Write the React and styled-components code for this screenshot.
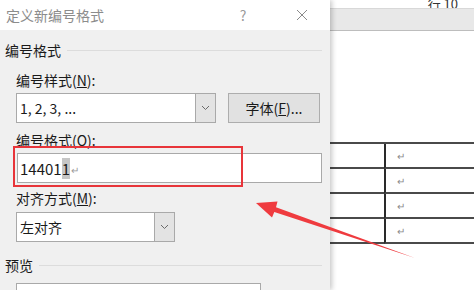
import React from 'react';
import styled, { createGlobalStyle } from 'styled-components';

const GlobalStyle = createGlobalStyle`
	html, body {
		margin: 0;
		padding: 0;
		background: #ffffff;
	}
	body {
		font-family: "Noto Sans CJK SC", "Noto Sans", sans-serif;
		color: #1a1a1a;
	}
`;

const Page = styled.div`
	position: relative;
	width: 474px;
	height: 290px;
	overflow: hidden;
	display: flex;
	flex-direction: row;
`;

const Dialog = styled.div`
	position: relative;
	z-index: 1;
	width: 330px;
	flex-shrink: 0;
	display: flex;
	flex-direction: column;
	overflow: hidden;
	background: #f0f0f0;
	box-shadow: 2px 0 5px rgba(0, 0, 0, 0.22);
`;

const TitleBar = styled.div`
	height: 30px;
	flex-shrink: 0;
	display: flex;
	align-items: center;
	background: #ffffff;
	padding-left: 6px;
	font-size: 14px;
	color: #8c8c8c;
`;

const TitleText = styled.span`
	flex: 1;
`;

const Help = styled.span`
	width: 14px;
	text-align: center;
	margin-right: 46px;
	color: #9a9a9a;
	font-size: 14px;
`;

const CloseBox = styled.span`
	width: 12px;
	height: 12px;
	margin-right: 22px;
	display: flex;
`;

const Body = styled.div`
	flex-shrink: 0;
	padding: 10px 8px 0 5px;
	display: flex;
	flex-direction: column;
`;

const GroupHeader = styled.div`
	display: flex;
	align-items: center;
	gap: 6px;
	height: 20px;
	font-size: 14px;
	margin-top: ${(p) => p.$top || 0}px;

	&::after {
		content: '';
		flex: 1;
		height: 1px;
		background: #dcdcdc;
	}
`;

const Label = styled.div`
	height: 20px;
	line-height: 20px;
	font-size: 14px;
	margin-left: 11px;
	margin-top: ${(p) => p.$top}px;
`;

const Row = styled.div`
	display: flex;
	align-items: center;
	gap: 12px;
	margin-left: 11px;
	margin-top: ${(p) => p.$top}px;
`;

const Select = styled.div`
	width: ${(p) => p.$width}px;
	height: 30px;
	box-sizing: border-box;
	border: 1px solid #a9a9a9;
	background: #ffffff;
	display: flex;
	align-items: center;
	font-size: 14px;
`;

const SelectValue = styled.span`
	flex: 1;
	padding-left: 3px;
`;

const Drop = styled.span`
	width: 19px;
	height: 100%;
	display: flex;
	align-items: center;
	justify-content: center;
	background: #e3e3e3;
	border-left: 1px solid #a9a9a9;
`;

const Button = styled.div`
	width: 92px;
	height: 30px;
	box-sizing: border-box;
	border: 1px solid #adadad;
	background: #e1e1e1;
	display: flex;
	align-items: center;
	justify-content: center;
	font-size: 14px;
`;

const TextBox = styled.div`
	margin-left: 12px;
	margin-top: 3px;
	height: 30px;
	box-sizing: border-box;
	border: 1px solid #a9a9a9;
	background: #ffffff;
	display: flex;
	align-items: center;
	padding-left: 2px;
	font-size: 15px;
`;

const Selected = styled.span`
	background: #c6c6c6;
`;

const Pilcrow = styled.span`
	font-size: 10px;
	color: #9a9a9a;
	margin-left: 1px;
	margin-top: 3px;
`;

const Preview = styled.div`
	margin-left: 11px;
	margin-top: 8px;
	width: 245px;
	height: 20px;
	box-sizing: border-box;
	border: 1px solid #a9a9a9;
	background: #ffffff;
`;

const Highlight = styled.div`
	position: absolute;
	left: 13px;
	top: 146px;
	width: 230px;
	height: 41px;
	box-sizing: border-box;
	border: 2.5px solid #e8353a;
	z-index: 2;
	pointer-events: none;
`;

const Doc = styled.div`
	flex: 1;
	display: flex;
	flex-direction: column;
	background: #ffffff;
`;

const Ruler = styled.div`
	height: 8px;
	flex-shrink: 0;
	overflow: hidden;
	display: flex;
	align-items: flex-end;
	justify-content: flex-end;
	padding-right: 16px;
	font-size: 13px;
	line-height: 9px;
	color: #333;
`;

const Band = styled.div`
	height: 21px;
	flex-shrink: 0;
	background: #e8e8e8;
	border-top: 1px solid #d8d8d8;
	border-bottom: 1px solid #bdbdbd;
`;

const Table = styled.div`
	margin-top: 111px;
	display: grid;
	grid-template-columns: 54px 1fr;
	border-top: 2px solid #4a4a4a;
`;

const Cell = styled.div`
	height: 23px;
	border-bottom: 2px solid #4a4a4a;
	border-left: ${(p) => (p.$second ? '2px solid #2a2a2a' : 'none')};
	display: flex;
	align-items: center;
	padding-left: 11px;
	font-size: 10px;
	color: #8a8a8a;
`;

const ArrowLayer = styled.svg`
	position: absolute;
	left: 0;
	top: 0;
	z-index: 3;
	pointer-events: none;
`;

const Chevron = () => (
	<svg width="9" height="6" viewBox="0 0 9 6">
		<path d="M1 1 L4.5 4.5 L8 1" fill="none" stroke="#6a6a6a" strokeWidth="1" />
	</svg>
);

const rows = [0, 1, 2, 3];

export default function App() {
	return (
		<Page>
			<GlobalStyle />
			<Dialog>
				<TitleBar>
					<TitleText>定义新编号格式</TitleText>
					<Help>?</Help>
					<CloseBox>
						<svg width="12" height="12" viewBox="0 0 12 12">
							<path d="M1 1 L11 11 M11 1 L1 11" stroke="#8a8a8a" strokeWidth="1" />
						</svg>
					</CloseBox>
				</TitleBar>
				<Body>
					<GroupHeader>编号格式</GroupHeader>
					<Label $top={10}>
						编号样式(<u>N</u>):
					</Label>
					<Row $top={3}>
						<Select $width={200}>
							<SelectValue>1, 2, 3, ...</SelectValue>
							<Drop>
								<Chevron />
							</Drop>
						</Select>
						<Button>
							字体(<u>F</u>)...
						</Button>
					</Row>
					<Label $top={7}>编号格式(O):</Label>
					<TextBox>
						14401<Selected>1</Selected>
						<Pilcrow>↵</Pilcrow>
					</TextBox>
					<Label $top={5}>
						对齐方式(<u>M</u>):
					</Label>
					<Row $top={4}>
						<Select $width={159}>
							<SelectValue>左对齐</SelectValue>
							<Drop>
								<Chevron />
							</Drop>
						</Select>
					</Row>
					<GroupHeader $top={13}>预览</GroupHeader>
					<Preview />
				</Body>
			</Dialog>
			<Doc>
				<Ruler>行 10</Ruler>
				<Band />
				<Table>
					{rows.map((r) => (
						<React.Fragment key={r}>
							<Cell />
							<Cell $second>↵</Cell>
						</React.Fragment>
					))}
				</Table>
			</Doc>
			<Highlight />
			<ArrowLayer width="474" height="290" viewBox="0 0 474 290">
				<polygon
					points="256,203 277.5,201.5 276,207.3 415,258 274.3,212 272,217.5"
					fill="#ef3b3f"
				/>
			</ArrowLayer>
		</Page>
	);
}
